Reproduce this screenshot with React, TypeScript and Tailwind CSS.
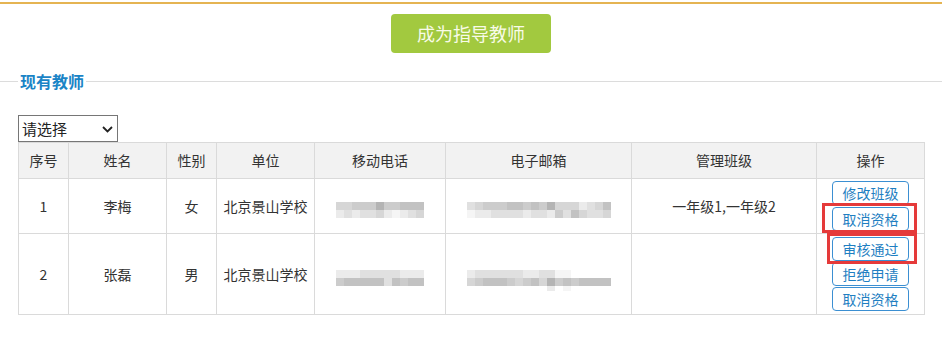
import React from "react";

const FONT = "font-['Microsoft_YaHei','Noto_Sans_CJK_SC',sans-serif]";

// pixelated (blurred) contact data, one entry per 8px block
const SHADES: Record<string, string> = {
  a: "bg-[#b4b4b4]",
  b: "bg-[#c2c2c2]",
  c: "bg-[#cccccc]",
  d: "bg-[#d6d6d6]",
  e: "bg-[#e0e0e0]",
  f: "bg-[#ebebeb]",
  g: "bg-[#f5f5f5]",
  w: "bg-transparent",
};

const PHONE_1 = ["ddcccaccbbb", "fefeedfgfed"];
const EMAIL_1 = ["edcccbbcbcadddfedb", "gffeeeefeefcebdeed"];
const PHONE_2 = ["fffeeeeefff", "cbbbbbebcbb"];
const EMAIL_2 = ["feeeeeeffeeggwwwww", "dcbbbcdcbdacbcbbbb", "wwwwwwwwwwfwgwwwww"];

function Mosaic({ rows }: { rows: string[] }) {
  return (
    <div className="inline-flex flex-col">
      {rows.map((r, i) => (
        <div key={i} className="flex">
          {r.split("").map((c, j) => (
            <span key={j} className={`block w-[8px] ${i === 2 ? "h-[5px]" : "h-[8px]"} ${SHADES[c]}`} />
          ))}
        </div>
      ))}
    </div>
  );
}

function OpButton({ label }: { label: string }) {
  return (
    <button className="block w-[77px] h-[24px] mx-auto border border-[#3b8fd2] rounded-[4px] bg-white text-[14px] leading-[22px] text-[#1f7fc2]">
      {label}
    </button>
  );
}

const HEADERS = ["序号", "姓名", "性别", "单位", "移动电话", "电子邮箱", "管理班级", "操作"];
const WIDTHS = ["w-[50px]", "w-[98px]", "w-[50px]", "w-[98px]", "w-[131px]", "w-[186px]", "w-[185px]", "w-[108px]"];

export default function App() {
  return (
    <div className={`relative w-[942px] h-[343px] bg-white overflow-hidden ${FONT} text-[#333]`}>
      <div className="mt-[2px] h-[2px] bg-[#e5b452]" />

      <div className="flex justify-center mt-[10px]">
        <button className="w-[160px] h-[39px] rounded-[4px] bg-[#a2c93f] text-[18px] text-[#f8fbe8]">
          成为指导教师
        </button>
      </div>

      <div className="flex items-center mt-[18px] h-[20px]">
        <div className="w-[18px] h-px bg-[#dcdcdc]" />
        <span className="px-[2px] text-[16px] font-bold leading-[20px] text-[#1a84c6]">现有教师</span>
        <div className="flex-1 h-px bg-[#dcdcdc]" />
      </div>

      <div className="ml-[18px] mt-[24px]">
        <div className="relative w-[100px] h-[27px] border border-[#767676] bg-white">
          <span className="absolute left-[3px] top-[2px] text-[15px] leading-[21px] text-[#222]">请选择</span>
          <svg className="absolute left-[83px] top-[10px]" width="11" height="7" viewBox="0 0 11 7">
            <path d="M1 1 L5.5 5.5 L10 1" fill="none" stroke="#222" strokeWidth="1.8" />
          </svg>
        </div>
      </div>

      <table className="ml-[18px] border-collapse table-fixed text-[14px] text-center">
        <colgroup>
          {WIDTHS.map((w, i) => (
            <col key={i} className={w} />
          ))}
        </colgroup>
        <thead>
          <tr className="h-[36px] bg-[#f2f2f2]">
            {HEADERS.map((h) => (
              <th key={h} className="border border-[#dadada] font-normal">
                {h}
              </th>
            ))}
          </tr>
        </thead>
        <tbody>
          <tr className="h-[55px]">
            <td className="border border-[#dadada]">1</td>
            <td className="border border-[#dadada]">李梅</td>
            <td className="border border-[#dadada]">女</td>
            <td className="border border-[#dadada]">北京景山学校</td>
            <td className="border border-[#dadada]">
              <Mosaic rows={PHONE_1} />
            </td>
            <td className="border border-[#dadada]">
              <Mosaic rows={EMAIL_1} />
            </td>
            <td className="border border-[#dadada]">一年级1,一年级2</td>
            <td className="border border-[#dadada]">
              <div className="flex flex-col gap-[2px]">
                <OpButton label="修改班级" />
                <OpButton label="取消资格" />
              </div>
            </td>
          </tr>
          <tr className="h-[81px]">
            <td className="border border-[#dadada]">2</td>
            <td className="border border-[#dadada]">张磊</td>
            <td className="border border-[#dadada]">男</td>
            <td className="border border-[#dadada]">北京景山学校</td>
            <td className="border border-[#dadada]">
              <Mosaic rows={PHONE_2} />
            </td>
            <td className="border border-[#dadada]">
              <div className="pt-[5px]">
                <Mosaic rows={EMAIL_2} />
              </div>
            </td>
            <td className="border border-[#dadada]" />
            <td className="border border-[#dadada]">
              <div className="flex flex-col gap-[1px]">
                <OpButton label="审核通过" />
                <OpButton label="拒绝申请" />
                <OpButton label="取消资格" />
              </div>
            </td>
          </tr>
        </tbody>
      </table>

      {/* red annotation boxes */}
      <div className="absolute left-[822px] top-[203px] w-[95px] h-[30px] border-[3px] border-[#e53a3a]" />
      <div className="absolute left-[827px] top-[233px] w-[90px] h-[31px] border-[3px] border-[#e53a3a]" />
    </div>
  );
}
